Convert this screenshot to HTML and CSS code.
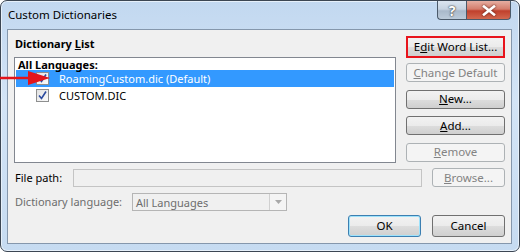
FILE: index.html
```html
<!DOCTYPE html>
<html lang="en">
<head>
    <meta charset="UTF-8">
    <title>Custom Dictionaries</title>
    <link rel="stylesheet" href="styles.css">
</head>
<body>
    <div class="window">
        <div class="titlebar">
            <span class="title">Custom Dictionaries</span>
            <div class="caption-btns">
                <div class="cap help">?</div>
                <div class="cap close">
                    <svg width="14" height="11" viewBox="0 0 14 11"><path d="M2 1.5 L12 9.5 M12 1.5 L2 9.5" stroke="#fff" stroke-width="2.6" stroke-linecap="square" fill="none"/></svg>
                </div>
            </div>
        </div>
        <div class="client">
            <div class="main">
                <div class="list-col">
                    <div class="group-label">Dictionary <u>L</u>ist</div>
                    <div class="listbox">
                        <div class="list-head">All Languages:</div>
                        <div class="item selected">
                            <span class="check"><svg width="11" height="11" viewBox="0 0 11 11"><path d="M2 5.5 L4.5 8.5 L9 1.5" stroke="#2b4a9e" stroke-width="1.6" fill="none"/></svg></span>
                            RoamingCustom.dic (Default)
                        </div>
                        <div class="item">
                            <span class="check"><svg width="11" height="11" viewBox="0 0 11 11"><path d="M2 5.5 L4.5 8.5 L9 1.5" stroke="#2b4a9e" stroke-width="1.6" fill="none"/></svg></span>
                            CUSTOM.DIC
                        </div>
                    </div>
                </div>
                <div class="btn-col">
                    <button class="btn marked">E<u>d</u>it Word List...</button>
                    <button class="btn disabled"><u>C</u>hange Default</button>
                    <button class="btn"><u>N</u>ew...</button>
                    <button class="btn"><u>A</u>dd...</button>
                    <button class="btn disabled"><u>R</u>emove</button>
                </div>
            </div>
            <div class="row path-row">
                <span class="field-label">File path:</span>
                <div class="textbox"></div>
                <button class="btn small disabled"><u>B</u>rowse...</button>
            </div>
            <div class="row lang-row">
                <span class="field-label dim">Dictionary lan<u>g</u>uage:</span>
                <div class="combo">
                    <span>All Languages</span>
                    <span class="drop"><svg width="7" height="4" viewBox="0 0 7 4"><path d="M0 0 H7 L3.5 4 Z" fill="#a8a8a8"/></svg></span>
                </div>
            </div>
            <div class="footer">
                <button class="btn small default">OK</button>
                <button class="btn small">Cancel</button>
            </div>
        </div>
        <svg class="arrow" width="52" height="16" viewBox="0 0 52 16">
            <path d="M0 8 H32" stroke="#e3141a" stroke-width="2.5"/>
            <path d="M28 1 L50 8 L28 15 Z" fill="#e3141a"/>
        </svg>
    </div>
</body>
</html>
```

FILE: styles.css
```css
body {
    margin: 0;
    padding: 0;
    font-family: 'Segoe UI', 'Noto Sans', sans-serif;
    font-size: 11px;
    color: #000;
    background: #fff;
}
.window {
    position: relative;
    width: 520px;
    height: 252px;
    box-sizing: border-box;
    border: 1px solid #3c4653;
    border-radius: 7px;
    padding: 0 7px 7px 6px;
    background: linear-gradient(to bottom, #c2d8f0 0%, #d3e4f6 40%, #c6dbf1 100%);
    box-shadow: inset 0 0 0 1px #e6f0fa;
}
.titlebar {
    height: 28px;
    display: flex;
    justify-content: space-between;
    align-items: flex-start;
}
.title {
    margin: 6px 0 0 1px;
    line-height: 16px;
    font-size: 11.5px;
}
.caption-btns {
    display: flex;
    margin-right: 1px;
}
.cap {
    height: 19px;
    box-sizing: border-box;
    border: 1px solid #4b5a6a;
    border-top: none;
    display: flex;
    align-items: center;
    justify-content: center;
}
.help {
    width: 29px;
    border-radius: 0 0 0 4px;
    border-right: none;
    background: linear-gradient(to bottom, #dbe5f0 0%, #c6d3e1 45%, #a9b9ca 55%, #bccbda 100%);
    color: #fff;
    font-weight: bold;
    font-size: 14px;
    text-shadow: 0 0 2px #333, 0 0 1px #333;
}
.close {
    width: 45px;
    border-radius: 0 0 4px 0;
    background: linear-gradient(to bottom, #e6aea2 0%, #d47d6c 45%, #c0402c 55%, #d2684f 100%);
}
.close svg {
    filter: drop-shadow(0 0 1px #5a1a10);
}
.client {
    height: 215px;
    box-sizing: border-box;
    border: 1px solid #8597ac;
    background: #f0f0f0;
    padding: 6px 6px 0 6px;
}
.main {
    display: flex;
    gap: 10px;
}
.list-col {
    width: 382px;
}
.group-label {
    font-weight: bold;
    line-height: 16px;
    margin: 0 0 5px 1px;
}
.listbox {
    height: 106px;
    box-sizing: border-box;
    border: 1px solid #828790;
    background: #fff;
    padding: 1px;
}
.list-head {
    font-weight: bold;
    line-height: 11px;
    padding-left: 2px;
}
.item {
    height: 17px;
    display: flex;
    align-items: center;
    padding-left: 20px;
}
.item.selected {
    background: #3399ff;
    color: #fff;
}
.check {
    width: 13px;
    height: 13px;
    box-sizing: border-box;
    border: 1px solid #8e8f8f;
    background: linear-gradient(135deg, #e2e2e2, #fbfbfb);
    margin-right: 10px;
    display: flex;
    align-items: center;
    justify-content: center;
}
.btn-col {
    width: 99px;
    display: flex;
    flex-direction: column;
    gap: 7.5px;
}
.btn {
    height: 19px;
    box-sizing: border-box;
    border: 1px solid #707070;
    border-radius: 3px;
    background: linear-gradient(to bottom, #f2f2f2 0%, #ebebeb 50%, #dddddd 51%, #cfcfcf 100%);
    font-family: inherit;
    font-size: 11.5px;
    color: #000;
    padding: 0;
    line-height: 16px;
}
.btn.marked {
    height: 22px;
    border: 2px solid #e8141c;
    border-radius: 0;
    margin-bottom: -2.5px;
}
.btn.disabled {
    border-color: #adb2b5;
    background: #f4f4f4;
    color: #838383;
}
.btn.small {
    width: 73px;
}
.btn.default {
    border-color: #3c7fb1;
    box-shadow: inset 0 0 0 1px #9ee2fb;
}
.row {
    display: flex;
    align-items: center;
    padding-left: 1px;
}
.path-row {
    margin-top: 5px;
    height: 19px;
}
.field-label {
    line-height: 16px;
}
.path-row .field-label {
    width: 58px;
}
.dim {
    color: #6d6d6d;
}
.textbox {
    width: 349px;
    height: 18px;
    box-sizing: border-box;
    border: 1px solid #c4c4c4;
    background: #f0f0f0;
    margin-right: 10px;
}
.lang-row {
    margin-top: 6px;
    height: 18px;
}
.lang-row .field-label {
    width: 117px;
}
.combo {
    width: 155px;
    height: 18px;
    box-sizing: border-box;
    border: 1px solid #b5b5b5;
    background: #f0f0f0;
    color: #6d6d6d;
    display: flex;
    align-items: center;
    justify-content: space-between;
    padding-left: 3px;
}
.drop {
    width: 17px;
    height: 16px;
    box-sizing: border-box;
    border-left: 1px solid #d0d0d0;
    background: #f4f4f4;
    display: flex;
    align-items: center;
    justify-content: center;
}
.footer {
    margin-top: 4px;
    display: flex;
    justify-content: flex-end;
    gap: 11px;
}
.footer .btn {
    height: 22px;
}
.arrow {
    position: absolute;
    left: -1px;
    top: 69px;
}
```
